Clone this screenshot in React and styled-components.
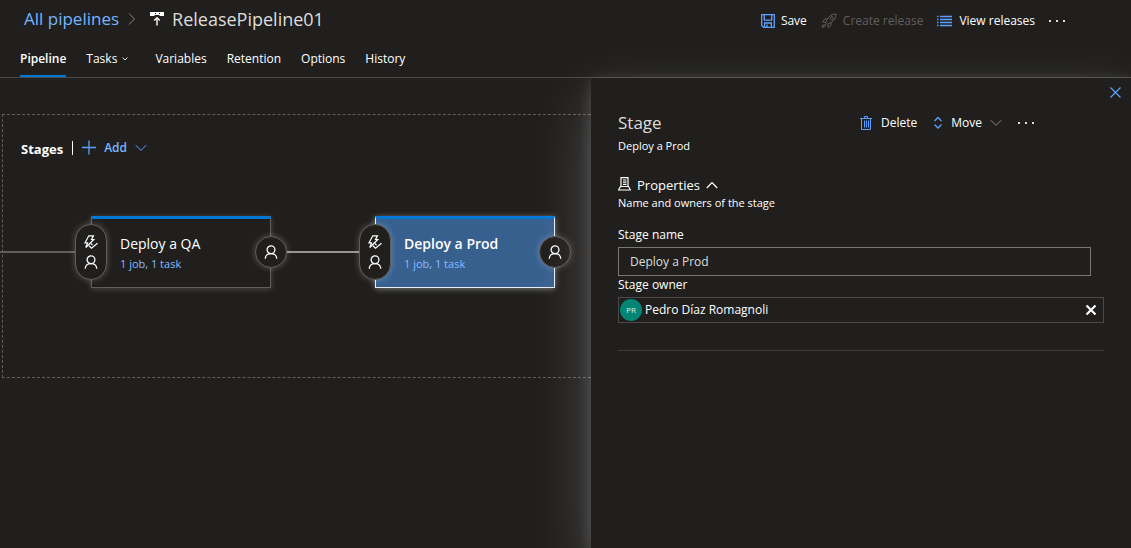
import React from "react";
import styled, { createGlobalStyle, css } from "styled-components";

const color = {
  page: "#201f1e",
  text: "#ffffff",
  soft: "#deddda",
  link: "#75b6ff",
  icon: "#5ca0ff",
  accent: "#0078d4",
  muted: "#605e5c",
  line: "#4a4a48",
};

const GlobalStyle = createGlobalStyle`
  *, *::before, *::after { box-sizing: border-box; }
  body {
    margin: 0;
    background: ${color.page};
    color: ${color.text};
    font-family: "Segoe UI", "Open Sans", "Noto Sans", sans-serif;
    font-size: 12px;
    line-height: 16px;
  }
  button, input { font: inherit; color: inherit; }
  h1, h2, h3, p { margin: 0; font-weight: 400; }
  a { text-decoration: none; }
`;

const Page = styled.div`
  display: flex;
  flex-direction: column;
  min-height: 100vh;
`;

const Header = styled.header`
  display: flex;
  flex-direction: column;
  border-bottom: 1px solid ${color.line};
`;

const TitleRow = styled.div`
  display: flex;
  justify-content: space-between;
  align-items: center;
  height: 42px;
  padding: 0 66px 0 24px;
`;

const Breadcrumb = styled.nav`
  display: flex;
  align-items: center;
  font-size: 17px;
  line-height: 24px;
  height: 38px;
  align-self: flex-start;
`;

const CrumbLink = styled.a`
  color: ${color.link};
  margin-right: 8px;
`;

const PageTitle = styled.h1`
  font-size: 18px;
  margin-left: 8px;
  color: ${color.soft};
`;

const CrumbIcon = styled.span`
  display: flex;
  margin-left: 13px;
`;

const Commands = styled.div`
  display: flex;
  align-items: center;
  gap: ${(p) => p.$gap}px;
`;

const CommandButton = styled.button`
  display: flex;
  align-items: center;
  gap: ${(p) => (p.$roomy ? 8 : 6)}px;
  padding: 0;
  border: 0;
  background: none;
  color: ${(p) => (p.$tone ? color[p.$tone] : color.text)};
  font-weight: ${(p) => (p.$strong ? 600 : 400)};
  line-height: 18px;
  cursor: pointer;
  &:disabled {
    color: ${color.muted};
    cursor: default;
  }
`;

const Tabs = styled.nav`
  display: flex;
  gap: 20px;
  height: 35px;
  padding: 0 20px;
`;

const Tab = styled.a`
  display: flex;
  align-items: center;
  gap: 4px;
  color: ${color.text};
  border-bottom: 2px solid transparent;
  ${(p) =>
    p.$active &&
    css`
      font-weight: 600;
      border-color: ${color.accent};
    `}
`;

const Body = styled.main`
  display: flex;
  flex: 1;
`;

const Canvas = styled.section`
  flex: 1;
  min-width: 0;
  overflow: hidden;
  padding: 36px 0 24px 2px;
`;

const StagesFrame = styled.div`
  width: 1200px;
  height: 264px;
  border: 1px dashed ${color.muted};
`;

const StagesHead = styled.div`
  display: flex;
  align-items: center;
  height: 44px;
  padding: 22px 0 0 18px;
`;

const StagesTitle = styled.h2`
  font-size: 13px;
  line-height: 18px;
  font-weight: 700;
  padding-top: 2px;
`;

const Divider = styled.span`
  width: 1px;
  height: 14px;
  margin: 0 9px;
  background: ${color.text};
`;

const Flow = styled.div`
  display: flex;
  align-items: center;
  padding-top: 57px;
  margin-left: -3px;
`;

const Connector = styled.span`
  width: ${(p) => p.$width}px;
  height: 2px;
  background: ${(p) => (p.$bright ? "#979593" : color.muted)};
`;

const StageCard = styled.article`
  position: relative;
  width: 180px;
  height: 72px;
  padding: 15px 0 0 28px;
  border: 1px solid ${(p) => (p.$selected ? "#e6edf7" : color.muted)};
  border-top: 3px solid ${color.accent};
  background: ${(p) => (p.$selected ? "#38608f" : color.page)};
  box-shadow: 0 1px 6px
    ${(p) => (p.$selected ? "rgba(255,255,255,.4)" : "rgba(255,255,255,.2)")};
`;

const StageName = styled.h3`
  font-size: 14px;
  line-height: 20px;
  font-weight: ${(p) => (p.$selected ? 600 : 400)};
`;

const StageLink = styled.a`
  display: block;
  font-size: 11px;
  line-height: 20px;
  color: #84bcff;
`;

const Condition = styled.button`
  position: absolute;
  top: 33px;
  display: flex;
  flex-direction: column;
  align-items: center;
  justify-content: center;
  gap: 6px;
  width: 32px;
  height: ${(p) => (p.$after ? 32 : 56)}px;
  padding: 0;
  ${(p) => (p.$after ? "right: -17px;" : "left: -17px;")}
  transform: translateY(-50%);
  border: 1px solid ${color.muted};
  border-radius: 16px;
  background: ${color.page};
  box-shadow: 0 0 6px rgba(255, 255, 255, 0.25);
  cursor: pointer;
`;

const Panel = styled.aside`
  position: relative;
  flex: 0 0 540px;
  padding: 35px 27px 24px;
  background: ${color.page};
  box-shadow: 0 24px 56px rgba(255, 255, 255, 0.22),
    0 4px 14px rgba(255, 255, 255, 0.18);
  clip-path: inset(-24px 0 0 -80px);
`;

const CloseButton = styled.button`
  position: absolute;
  top: 8px;
  right: 9px;
  display: flex;
  padding: 0;
  border: 0;
  background: none;
  cursor: pointer;
`;

const PanelHead = styled.div`
  display: flex;
  justify-content: space-between;
  padding-right: 70px;
`;

const PanelTitle = styled.h2`
  font-size: 17px;
  line-height: 20px;
  color: ${color.soft};
`;

const Caption = styled.p`
  font-size: 11px;
  line-height: 16px;
`;

const HeadCaption = styled(Caption)`
  margin-top: 5px;
`;

const SectionToggle = styled.button`
  display: flex;
  align-items: center;
  gap: 6px;
  margin-top: 21px;
  padding: 0;
  border: 0;
  background: none;
  font-size: 13px;
  line-height: 20px;
  cursor: pointer;
`;

const Form = styled.form`
  display: flex;
  flex-direction: column;
  margin-top: 15px;
  padding-bottom: 27px;
  border-bottom: 1px solid #3b3a39;
`;

const Label = styled.label`
  line-height: 18px;
  margin-bottom: 3px;
`;

const NameInput = styled.input`
  height: 29px;
  margin: 0 13px 0 0;
  padding: 0 11px;
  border: 1px solid #797775;
  border-radius: 0;
  outline: 0;
  background: transparent;
  color: ${color.soft};
`;

const OwnerField = styled.div`
  display: flex;
  align-items: center;
  height: 26px;
  padding: 0 6px 0 1px;
  border: 1px solid ${color.line};
`;

const Avatar = styled.span`
  flex: none;
  width: 22px;
  height: 22px;
  border-radius: 50%;
  background: #038574;
  color: #d5efeb;
  font-size: 8px;
  line-height: 22px;
  text-align: center;
`;

const OwnerInput = styled.input`
  flex: 1;
  min-width: 0;
  padding: 0 0 0 3px;
  border: 0;
  outline: 0;
  background: transparent;
`;

const ClearButton = styled.button`
  display: flex;
  padding: 0;
  border: 0;
  background: none;
  cursor: pointer;
`;

function Icon({ w = 16, h = 16, stroke = color.icon, sw = 1, children }) {
  return (
    <svg
      width={w}
      height={h}
      viewBox={`0 0 ${w} ${h}`}
      fill="none"
      stroke={stroke}
      strokeWidth={sw}
      aria-hidden="true"
    >
      {children}
    </svg>
  );
}

const Chevron = ({ stroke = color.icon }) => (
  <Icon w={12} h={12} stroke={stroke}>
    <path d="M.8 3.2 6 8.4l5.200-5.200" />
  </Icon>
);

const Dots = () => (
  <Icon w={16} h={4} stroke="none">
    <path fill={color.soft} d="M0 1h2v2H0zM7 1h2v2H7zM14 1h2v2h-2z" />
  </Icon>
);

const Person = () => (
  <Icon w={14} h={14} stroke="#ffffff" sw={1.3}>
    <circle cx="7" cy="4.800" r="3.900" />
    <path d="M1.200 13.800c.2-3 2.400-5.100 5.800-5.100s5.600 2.100 5.800 5.100" />
  </Icon>
);

const Trigger = () => (
  <Icon w={14} h={14} stroke="#ffffff" sw={1.2}>
    <path d="M4.800 .8h4.700L7.500 4.500h2.300L1.800 12.500l1.700-4.700H1z" />
    <path d="M5 10.800l2.500 2.400 6-5M6.800 8.500l1.800 1.600" />
  </Icon>
);

function Stage({ name, selected }) {
  return (
    <StageCard $selected={selected}>
      <Condition aria-label="Pre-deployment conditions">
        <Trigger />
        <Person />
      </Condition>
      <StageName $selected={selected}>{name}</StageName>
      <StageLink href="#tasks">1 job, 1 task</StageLink>
      <Condition $after aria-label="Post-deployment conditions">
        <Person />
      </Condition>
    </StageCard>
  );
}

export default function App() {
  return (
    <>
      <GlobalStyle />
      <Page>
        <Header>
          <TitleRow>
            <Breadcrumb aria-label="Breadcrumb">
              <CrumbLink href="#all">All pipelines</CrumbLink>
              <Icon w={10} h={14} stroke="#8a8886">
                <path d="M2 1.500 7.500 7 2 12.500" />
              </Icon>
              <CrumbIcon>
                <Icon w={14} h={14} stroke="#ffffff" sw={1.4}>
                  <path
                    fill="#ffffff"
                    stroke="none"
                    fillRule="evenodd"
                    d="M0 0h14v4h-4.500V3h-5v1H0zM5 1v1h1V1zM9 1v1h1V1z"
                  />
                  <path d="M7 13.500V6M4.200 8.600 7 5.800l2.800 2.800" />
                </Icon>
              </CrumbIcon>
              <PageTitle>ReleasePipeline01</PageTitle>
            </Breadcrumb>
            <Commands $gap={14}>
              <CommandButton>
                <Icon w={14} h={14} sw={1.3}>
                  <path d="M.7.7h12.600v12.600H2.500L.7 11.500z" />
                  <path d="M3.300.7v5.500h7.400V.7M3.600 13.300V9h6.800v4.300M6 10.500v2.800" />
                </Icon>
                Save
              </CommandButton>
              <CommandButton disabled>
                <Icon w={16} h={16} stroke={color.muted}>
                  <path d="M15 1c-4 0-6.500 1.500-8.500 5L4.800 9.500l1.800 1.800L10 9.500c3.500-2 5-4.500 5-8.500z" />
                  <path d="M6.500 6H3.800L1.500 8.800l3.300.7M10 9.500v2.800l-2.800 2.300-.6-3.300M4 11l-2.500 3.500L5 12.200M2 11.500l-1 2.500" />
                  <circle cx="10.800" cy="5.200" r="1.500" />
                </Icon>
                Create release
              </CommandButton>
              <CommandButton>
                <Icon w={16} h={12} sw={1.3}>
                  <path d="M0 1.500h1.500M0 4.500h1.500M0 7.500h1.500M0 10.500h1.500M3 1.500h12M3 4.500h12M3 7.500h12M3 10.500h12" />
                </Icon>
                View releases
              </CommandButton>
              <CommandButton aria-label="More actions">
                <Dots />
              </CommandButton>
            </Commands>
          </TitleRow>
          <Tabs aria-label="Pipeline views">
            <Tab href="#pipeline" $active>
              Pipeline
            </Tab>
            <Tab href="#tasks">
              Tasks
              <Icon w={14} h={8} stroke={color.soft}>
                <path d="M1.500 2.500 4 5l2.500-2.500" />
              </Icon>
            </Tab>
            <Tab href="#variables">Variables</Tab>
            <Tab href="#retention">Retention</Tab>
            <Tab href="#options">Options</Tab>
            <Tab href="#history">History</Tab>
          </Tabs>
        </Header>
        <Body>
          <Canvas>
            <StagesFrame>
              <StagesHead>
                <StagesTitle>Stages</StagesTitle>
                <Divider />
                <CommandButton $tone="link" $strong $roomy>
                  <Icon w={14} h={16} sw={1.3}>
                    <path d="M0 7.500h14M7 .5v14" />
                  </Icon>
                  Add
                  <Chevron />
                </CommandButton>
              </StagesHead>
              <Flow>
                <Connector $width={91} />
                <Stage name="Deploy a QA" />
                <Connector $width={104} $bright />
                <Stage name="Deploy a Prod" selected />
              </Flow>
            </StagesFrame>
          </Canvas>
          <Panel>
            <CloseButton aria-label="Close">
              <Icon w={13} h={13} sw={1.2}>
                <path d="M1.500 1.500l10 10M11.500 1.500l-10 10" />
              </Icon>
            </CloseButton>
            <PanelHead>
              <PanelTitle>Stage</PanelTitle>
              <Commands $gap={16}>
                <CommandButton $roomy>
                  <Icon w={14} h={16}>
                    <path d="M1 3.500h12M2.500 3.500v11h9v-11M5.500 3V1.500h3V3M5.500 5.500v7M7.500 5.500v7M9.500 5.500v7" />
                  </Icon>
                  Delete
                </CommandButton>
                <CommandButton $roomy>
                  <Icon w={10} h={14} sw={1.3}>
                    <path d="M1.500 5 5 1.500 8.500 5M1.500 8.500 5 12l3.500-3.500" />
                  </Icon>
                  Move
                  <Chevron stroke="#8a8886" />
                </CommandButton>
                <CommandButton aria-label="More stage actions">
                  <Dots />
                </CommandButton>
              </Commands>
            </PanelHead>
            <HeadCaption>Deploy a Prod</HeadCaption>
            <SectionToggle aria-expanded="true">
              <Icon w={13} h={16} stroke="#ffffff" sw={1.2}>
                <path d="M3 9.500V.600h7v8.900M5 3h3.500M5 5.200h3.500M5 7.400h3.500" />
                <path d="M2.500 9.500h8l2 3.500H.5z" />
              </Icon>
              Properties
              <Icon w={12} h={10} stroke="#ffffff" sw={1.3}>
                <path d="M.8 8 6 2.600 11.200 8" />
              </Icon>
            </SectionToggle>
            <Caption>Name and owners of the stage</Caption>
            <Form>
              <Label htmlFor="stage-name">Stage name</Label>
              <NameInput id="stage-name" defaultValue="Deploy a Prod" />
              <Label htmlFor="stage-owner">Stage owner</Label>
              <OwnerField>
                <Avatar aria-hidden="true">PR</Avatar>
                <OwnerInput
                  id="stage-owner"
                  defaultValue="Pedro Díaz Romagnoli"
                />
                <ClearButton type="button" aria-label="Remove owner">
                  <Icon w={12} h={12} stroke="#ffffff" sw={2.2}>
                    <path d="M1.500 1.500l9 9M10.500 1.500l-9 9" />
                  </Icon>
                </ClearButton>
              </OwnerField>
            </Form>
          </Panel>
        </Body>
      </Page>
    </>
  );
}
